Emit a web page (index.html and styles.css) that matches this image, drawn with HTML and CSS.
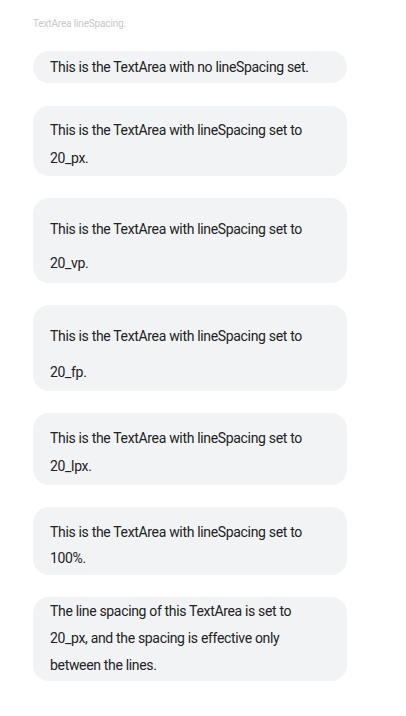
FILE: index.html
```html
<!DOCTYPE html>
<html>
<head>
<meta charset="utf-8">
<link rel="stylesheet" href="styles.css">
</head>
<body>
<main class="page">
  <p class="caption">TextArea lineSpacing.</p>
  <div class="list">
    <div class="area area-none">This is the TextArea with no lineSpacing set.</div>
    <div class="area area-px">This is the TextArea with lineSpacing set to 20_px.</div>
    <div class="area area-vp">This is the TextArea with lineSpacing set to 20_vp.</div>
    <div class="area area-fp">This is the TextArea with lineSpacing set to 20_fp.</div>
    <div class="area area-lpx">This is the TextArea with lineSpacing set to 20_lpx.</div>
    <div class="area area-pct">This is the TextArea with lineSpacing set to 100%.</div>
    <div class="area area-only">The line spacing of this TextArea is set to 20_px, and the spacing is effective only between the lines.</div>
  </div>
</main>
</body>
</html>
```

FILE: styles.css
```css
html, body {
  margin: 0;
  padding: 0;
  background: #ffffff;
}

.page {
  padding: 17px 0 0 33px;
  font-family: Roboto, "Noto Sans", sans-serif;
}

.caption {
  margin: 0;
  font-size: 10px;
  line-height: 14px;
  color: #c9c9c9;
  letter-spacing: -0.15px;
}

.list {
  margin-top: 20px;
  width: 314px;
  display: flex;
  flex-direction: column;
  gap: 22px;
}

.area {
  box-sizing: border-box;
  background: #f1f3f5;
  border-radius: 16px;
  padding-left: 17px;
  padding-right: 17px;
  font-size: 14px;
  letter-spacing: -0.33px;
  color: #222222;
}

.area-none { padding-top: 7px; padding-bottom: 7px; line-height: 18px; margin-bottom: 1px; }
.area-px   { padding-top: 10px; padding-bottom: 4px; line-height: 28px; }
.area-vp   { padding-top: 14px; padding-bottom: 3px; line-height: 34px; }
.area-fp   { padding-top: 13px; padding-bottom: 1px; line-height: 36px; }
.area-lpx  { padding-top: 11px; padding-bottom: 5px; line-height: 28px; }
.area-pct  { padding-top: 12px; padding-bottom: 4px; line-height: 26px; }
.area-only { padding-top: 1px; padding-bottom: 2px; line-height: 27px; }
```
